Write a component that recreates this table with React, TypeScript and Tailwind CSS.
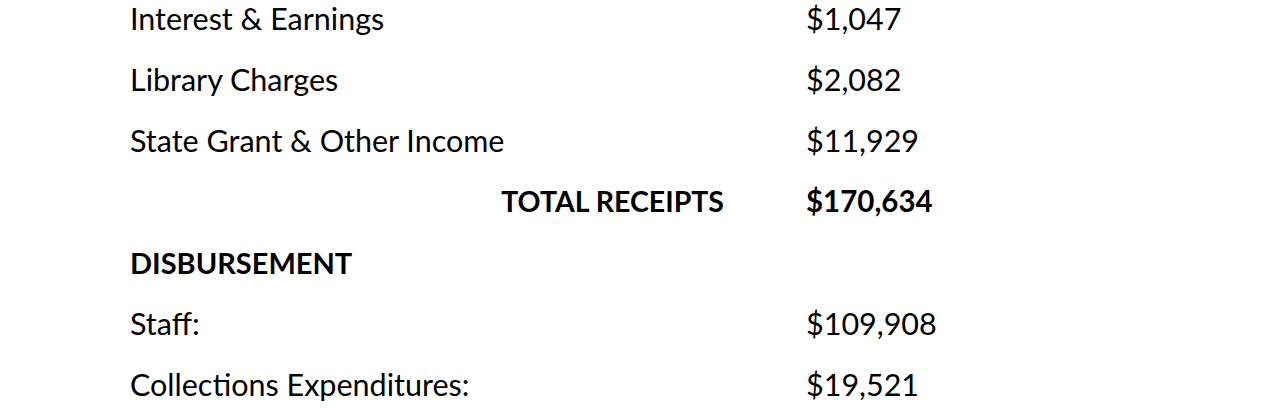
import React from 'react'

type Row = { label: string; value?: string; kind?: 'item' | 'total' | 'head' }

const rows: Row[] = [
  { label: 'Interest & Earnings', value: '$1,047' },
  { label: 'Library Charges', value: '$2,082' },
  { label: 'State Grant & Other Income', value: '$11,929' },
  { label: 'TOTAL RECEIPTS', value: '$170,634', kind: 'total' },
  { label: 'DISBURSEMENT', kind: 'head' },
  { label: 'Staff:', value: '$109,908' },
  { label: 'Collections Expenditures:', value: '$19,521' },
]

export default function App() {
  return (
    <div className="h-[420px] w-[1275px] overflow-hidden bg-white text-black" style={{ fontFamily: 'Lato, "Open Sans", sans-serif' }}>
      <div className="-mt-[12px] pl-[130px] text-[30.5px]">
        {rows.map((r) => (
          <div key={r.label} className="grid h-[61px] grid-cols-[676px_1fr] items-center">
            {r.kind === 'total' ? (
              <div className="pr-[82px] text-right text-[28.5px] font-bold">{r.label}</div>
            ) : (
              <div className={r.kind === 'head' ? 'text-[29px] font-bold' : ''}>{r.label}</div>
            )}
            <div className={r.kind === 'total' ? 'text-[29.5px] font-bold' : ''}>{r.value}</div>
          </div>
        ))}
      </div>
    </div>
  )
}
